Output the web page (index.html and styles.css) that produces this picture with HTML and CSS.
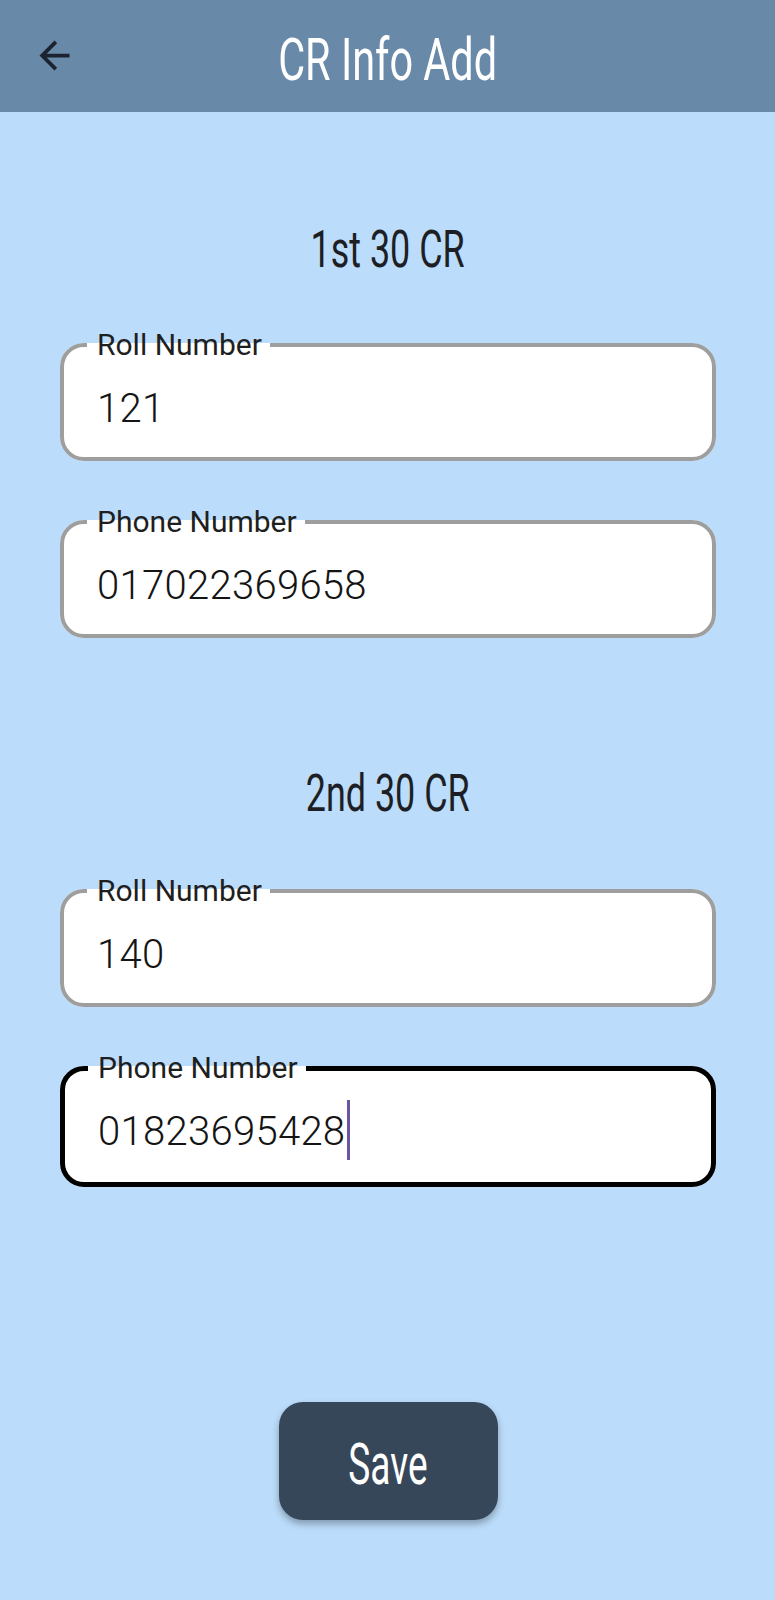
FILE: index.html
```html
<!DOCTYPE html>
<html lang="en">
<head>
<meta charset="utf-8">
<title>CR Info Add</title>
<link rel="stylesheet" href="styles.css">
</head>
<body>
<header class="app-bar">
  <button class="back-btn" aria-label="Back">
    <svg class="back-icon" viewBox="0 0 24 24" width="45" height="45"><path d="M20 11H7.83l5.59-5.59L12 4l-8 8 8 8 1.41-1.41L7.83 13H20v-2z"/></svg>
  </button>
  <h1 class="app-title"><span class="condensed">CR Info Add</span></h1>
  <div></div>
</header>
<main class="content">
  <h2 class="section-title"><span class="condensed">1st 30 CR</span></h2>
  <fieldset class="field">
    <legend class="field-label">Roll Number</legend>
    <div class="field-value">121</div>
  </fieldset>
  <fieldset class="field">
    <legend class="field-label">Phone Number</legend>
    <div class="field-value">017022369658</div>
  </fieldset>

  <h2 class="section-title second"><span class="condensed">2nd 30 CR</span></h2>
  <fieldset class="field">
    <legend class="field-label">Roll Number</legend>
    <div class="field-value">140</div>
  </fieldset>
  <fieldset class="field focused">
    <legend class="field-label">Phone Number</legend>
    <div class="field-value">01823695428<span class="caret"></span></div>
  </fieldset>

  <div class="actions">
    <button class="save-btn"><span class="condensed">Save</span></button>
  </div>
</main>
</body>
</html>
```

FILE: styles.css
```css
* { box-sizing: border-box; }

body {
  margin: 0;
  min-height: 1600px;
  background: #bbdcfa;
  font-family: Roboto, "Noto Sans", sans-serif;
  color: #1e1e1e;
}

.app-bar {
  height: 112px;
  background: #6889a8;
  display: grid;
  grid-template-columns: 1fr auto 1fr;
  align-items: center;
}

.back-btn {
  justify-self: start;
  margin: 0 0 2px 32px;
  padding: 0;
  border: 0;
  background: none;
  width: 45px;
  height: 45px;
  display: block;
}

.back-icon {
  display: block;
  fill: #1c2330;
}

.app-title {
  margin: 7px 0 0 0;
  font-weight: 400;
  font-size: 60px;
  line-height: 72px;
  color: #ffffff;
  text-align: center;
}

.condensed {
  display: inline-block;
  transform: scaleX(0.69);
  transform-origin: center;
  white-space: nowrap;
}

.content {
  padding: 0 59px 0 60px;
  display: flex;
  flex-direction: column;
}

.section-title {
  margin: 108px 0 50px 0;
  font-weight: 400;
  font-size: 52px;
  line-height: 60px;
  color: #1d1f24;
  text-align: center;
}

.section-title.second {
  margin-top: 80px;
  margin-bottom: 52px;
}

.field {
  margin: 0 0 46px 0;
  padding: 0 0 24px 0;
  min-width: 0;
  border: 4.5px solid #9e9e9e;
  border-radius: 24px;
  background: #ffffff;
}

.field:last-of-type { margin-bottom: 0; }

.field.focused {
  border-color: #000000;
  border-width: 5px;
}

.field-label {
  margin-left: 23px;
  padding: 0 8px 0 10px;
  font-size: 30px;
  line-height: 30px;
  color: #1f1f1f;
}

.field-value {
  padding: 25px 0 0 33px;
  font-size: 40px;
  font-weight: 300;
  line-height: 48px;
  color: #141414;
  letter-spacing: 0.3px;
}

.caret {
  display: inline-block;
  width: 3px;
  height: 60px;
  margin: -12px 0 -2px 2px;
  vertical-align: -13px;
  background: #6a55a3;
}

.actions {
  display: flex;
  justify-content: center;
  margin-top: 215px;
}

.save-btn {
  width: 219px;
  height: 118px;
  padding: 6px 0 0 0;
  border: 0;
  border-radius: 24px;
  background: #37475a;
  color: #ffffff;
  font-family: Roboto, "Noto Sans", sans-serif;
  font-size: 57px;
  line-height: 1;
  box-shadow: 0 4px 7px rgba(0, 0, 0, 0.3);
}

.save-btn .condensed { transform: scaleX(0.65); }
```
